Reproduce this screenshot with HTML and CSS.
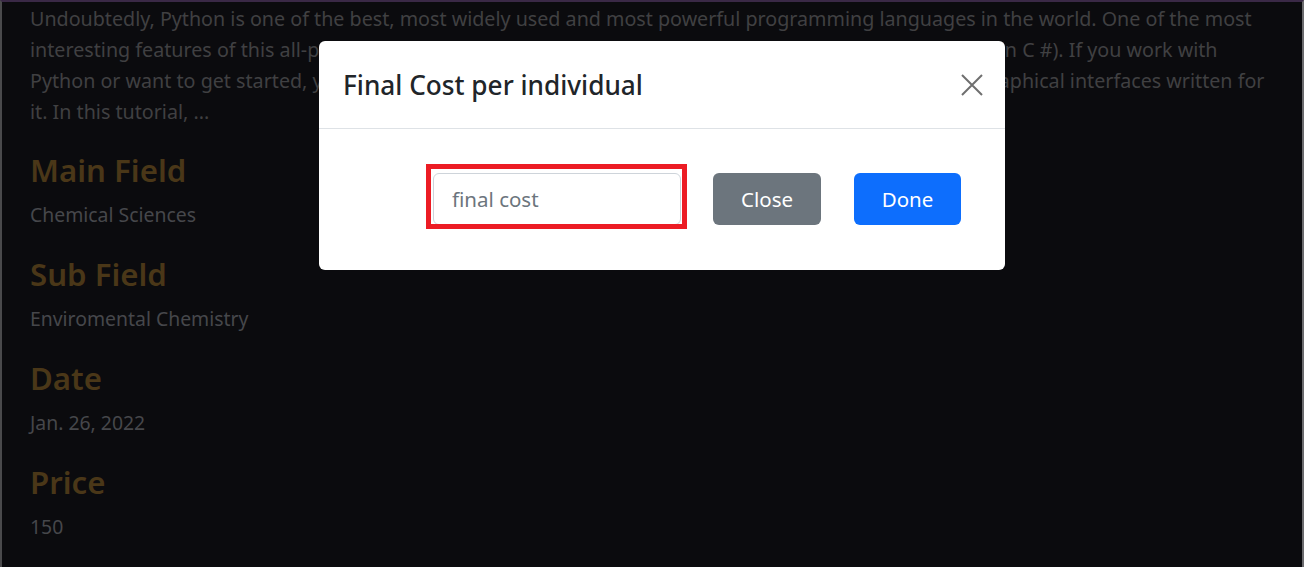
FILE: index.html
```html
<!DOCTYPE html>
<html lang="en">
<head>
<meta charset="utf-8">
<title>Article</title>
<link rel="stylesheet" href="styles.css">
</head>
<body>
<main class="page">
  <p class="lead">Undoubtedly, Python is one of the best, most widely used and most powerful programming languages in the world. One of the most<br>interesting features of this all-purpose language is the ability to get desktop applications (similar to ones in C #). If you work with<br>Python or want to get started, you should really be familiar with some of the most popular and helpful graphical interfaces written for<br>it. In this tutorial, ...</p>
  <section class="field">
    <h2 class="field-title">Main Field</h2>
    <p class="field-value">Chemical Sciences</p>
  </section>
  <section class="field">
    <h2 class="field-title">Sub Field</h2>
    <p class="field-value">Enviromental Chemistry</p>
  </section>
  <section class="field">
    <h2 class="field-title">Date</h2>
    <p class="field-value">Jan. 26, 2022</p>
  </section>
  <section class="field">
    <h2 class="field-title">Price</h2>
    <p class="field-value">150</p>
  </section>
</main>

<div class="modal" role="dialog" aria-labelledby="modalTitle">
  <div class="modal-header">
    <h4 class="modal-title" id="modalTitle">Final Cost per individual</h4>
    <button class="btn-close" type="button" aria-label="Close">
      <svg viewBox="0 0 22 22" width="22" height="22"><path d="M1 1 L21 21 M21 1 L1 21" stroke="#000" stroke-width="2" fill="none"/></svg>
    </button>
  </div>
  <div class="modal-body">
    <div class="highlight">
      <input class="form-control" type="text" placeholder="final cost">
    </div>
    <button class="btn btn-secondary" type="button">Close</button>
    <button class="btn btn-primary" type="button">Done</button>
  </div>
</div>
</body>
</html>
```

FILE: styles.css
```css
html, body {
  margin: 0;
  padding: 0;
}
body {
  width: 1304px;
  height: 567px;
  box-sizing: border-box;
  overflow: hidden;
  background: #0b0b0e;
  border-top: 2px solid #3a2946;
  border-left: 2px solid #4a4a4c;
  border-right: 2px solid #6b6b6e;
  font-family: "Noto Sans", "Open Sans", sans-serif;
  position: relative;
}
.page {
  padding: 1px 28px 0;
}
.lead {
  margin: 0 0 23px;
  font-size: 19.7px;
  line-height: 31px;
  color: #404042;
  white-space: nowrap;
}
.field-title {
  margin: 0 0 11px;
  font-size: 31.2px;
  line-height: 40px;
  font-weight: 600;
  color: #4a3718;
}
.field-value {
  margin: 0 0 25px;
  font-size: 19.4px;
  line-height: 28px;
  color: #46474b;
}
.modal {
  position: absolute;
  left: 317px;
  top: 39px;
  width: 686px;
  background: #fff;
  border-radius: 6px;
  overflow: hidden;
}
.modal-header {
  display: flex;
  align-items: center;
  justify-content: space-between;
  height: 88px;
  box-sizing: border-box;
  padding: 0 22px 0 24px;
  border-bottom: 1px solid #dee2e6;
}
.modal-title {
  margin: 0;
  font-size: 26.2px;
  font-weight: 500;
  color: #212529;
}
.btn-close {
  border: 0;
  background: none;
  padding: 0;
  width: 22px;
  height: 22px;
  opacity: 0.56;
  display: flex;
}
.modal-body {
  display: flex;
  align-items: center;
  justify-content: flex-end;
  padding: 44px 44px 45px;
}
.highlight {
  position: relative;
  margin-right: 32px;
  display: flex;
}
.highlight::after {
  content: "";
  position: absolute;
  top: -9px;
  left: -7px;
  right: -6px;
  bottom: -4px;
  border: 5px solid #ec1c24;
  pointer-events: none;
}
.form-control {
  width: 248px;
  height: 52px;
  box-sizing: border-box;
  border: 1px solid #ced4da;
  border-radius: 6px;
  padding: 0 18px;
  font-family: inherit;
  font-size: 20.5px;
  color: #212529;
  outline: none;
}
.form-control::placeholder {
  color: #6c757d;
}
.btn {
  height: 52px;
  border: 0;
  border-radius: 6px;
  padding: 0;
  font-family: inherit;
  font-size: 20.5px;
  color: #fff;
}
.btn-secondary {
  background: #6c757d;
  width: 108px;
  margin-right: 33px;
}
.btn-primary {
  background: #0d6efd;
  width: 107px;
}
```
